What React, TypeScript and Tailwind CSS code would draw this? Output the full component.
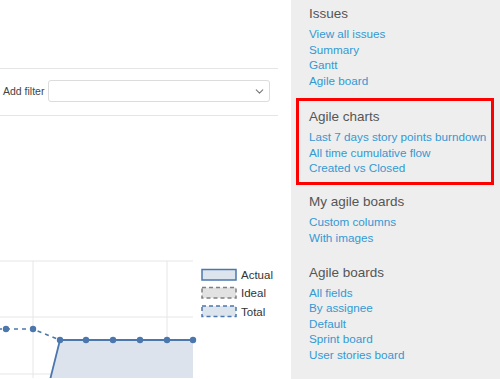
import { ChevronDown } from 'lucide-react';

const sections = [
  { title: 'Issues', links: ['View all issues', 'Summary', 'Gantt', 'Agile board'] },
  {
    title: 'Agile charts',
    links: ['Last 7 days story points burndown', 'All time cumulative flow', 'Created vs Closed'],
    highlight: true,
  },
  { title: 'My agile boards', links: ['Custom columns', 'With images'] },
  { title: 'Agile boards', links: ['All fields', 'By assignee', 'Default', 'Sprint board', 'User stories board'] },
];

const BLUE = '#4b77ad';
const Y0 = 117;

function BurndownChart() {
  const actual = [60, 86, 113, 140, 167, 193];
  return (
    <svg width="291" height="262" viewBox={`0 ${Y0} 291 262`} className="block">
      {/* grid */}
      {[262, 318, 375].map((y) => (
        <line key={y} x1="0" x2="193" y1={y} y2={y} stroke="#e6e6e6" strokeWidth="1" />
      ))}
      {[33, 167].map((x) => (
        <line key={x} x1={x} x2={x} y1="262" y2="380" stroke="#e6e6e6" strokeWidth="1" />
      ))}

      {/* actual area */}
      <path d="M50 381 L60 341 L193 341 L193 381 Z" fill="#dce3ed" />

      {/* total (dashed) */}
      <path d="M-10 330 L33 330 L60 341" fill="none" stroke={BLUE} strokeWidth="1.6" strokeDasharray="4 4" />
      {[6, 33].map((x) => (
        <circle key={x} cx={x} cy="330" r="3.2" fill={BLUE} />
      ))}

      {/* actual line */}
      <path d="M50 381 L60 341 L193 341" fill="none" stroke={BLUE} strokeWidth="1.8" />
      {actual.map((x) => (
        <circle key={x} cx={x} cy="341" r="3.2" fill={BLUE} />
      ))}

      {/* legend */}
      <rect x="202" y="270.5" width="34" height="10.5" fill="#dce4ee" stroke={BLUE} strokeWidth="1.5" />
      <rect x="202" y="288.5" width="34" height="10.5" fill="#e2e2e2" stroke="#808080" strokeWidth="1.5" strokeDasharray="4 3" />
      <rect x="202" y="307" width="34" height="10.5" fill="#dce4ee" stroke={BLUE} strokeWidth="1.5" strokeDasharray="4 3" />
      <g fontFamily='"Liberation Sans", Arial, sans-serif' fontSize="11.5" fill="#333">
        <text x="241" y="279.5">Actual</text>
        <text x="241" y="298">Ideal</text>
        <text x="241" y="316.5">Total</text>
      </g>
    </svg>
  );
}

export default function App() {
  return (
    <div className="w-[500px] h-[379px] flex overflow-hidden bg-white font-['Liberation_Sans',Arial,sans-serif]">
      <div className="w-[291px] shrink-0 bg-white">
        <div className="w-[278px]">
          <div className="h-[69px] border-b border-[#e5e5e5]" />
          <div className="h-[47px] border-b border-[#e5e5e5] flex items-start pt-[11px] pl-[3px]">
            <span className="text-[10.5px] leading-[22px] text-[#444] w-[45px]">Add filter</span>
            <div className="w-[222px] h-[22px] border border-[#dcdcdc] rounded-[3px] bg-white flex items-center justify-end pr-[3px]">
              <ChevronDown size={13} strokeWidth={2} className="text-[#777]" />
            </div>
          </div>
        </div>
        <BurndownChart />
      </div>

      <div className="flex-1 bg-[#eeeeee] pl-[18px] pt-[5px] pr-[6px]">
        {sections.map((s, i) => {
          const body = (
            <>
              <h3 className="text-[13.5px] leading-[18px] text-[#555] font-normal">{s.title}</h3>
              <ul className="mt-[3px]">
                {s.links.map((l) => (
                  <li key={l} className="text-[11.7px] leading-[15.5px] text-[#3399d3] whitespace-nowrap">
                    <a href="#">{l}</a>
                  </li>
                ))}
              </ul>
            </>
          );
          if (s.highlight) {
            return (
              <div key={s.title} className="-ml-[13px] mt-[9.5px] border-[3px] border-[#ff0000] pl-[10px] pt-[7.5px] pb-[6px]">
                {body}
              </div>
            );
          }
          return (
            <div key={s.title} className={i === 0 ? '' : i === 2 ? 'mt-[8.5px]' : 'mt-[18.5px]'}>
              {body}
            </div>
          );
        })}
      </div>
    </div>
  );
}
